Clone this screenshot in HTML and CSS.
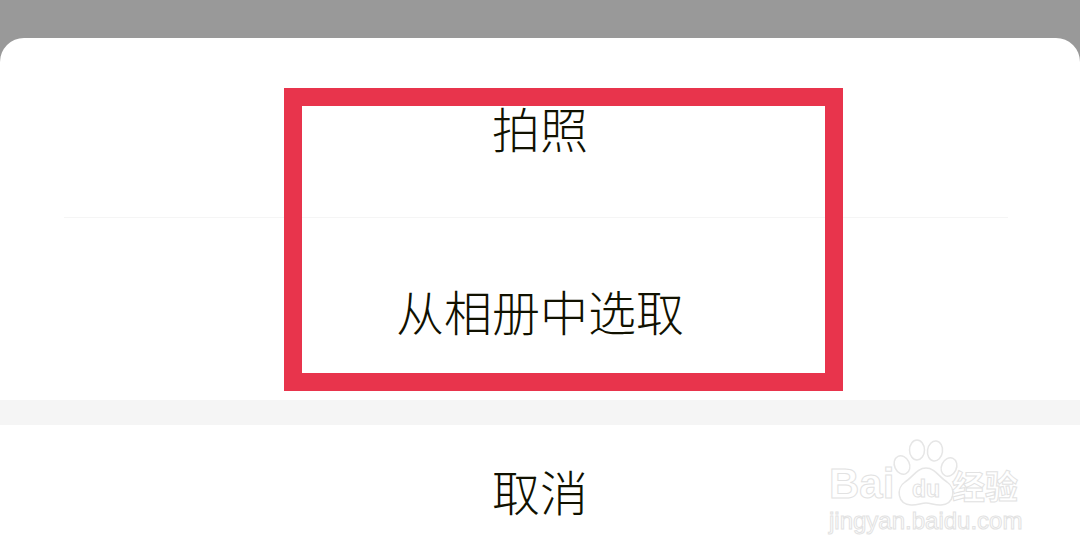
FILE: index.html
```html
<!DOCTYPE html>
<html lang="zh">
<head>
<meta charset="utf-8">
<title>选取照片</title>
<link rel="stylesheet" href="styles.css">
</head>
<body>
<div class="screen">
  <div class="scrim"></div>
  <div class="sheet">
    <div class="row row-first">拍照</div>
    <div class="row row-second">从相册中选取</div>
    <div class="band"></div>
    <div class="row row-cancel">取消</div>
  </div>
  <div class="highlight"></div>
  <div class="watermark">
    <div class="wm-top">
      <span class="wm-bai">Bai</span>
      <span class="wm-paw">
        <svg class="paw" viewBox="0 0 70 74" width="70" height="74" aria-hidden="true">
          <g fill="#fff" stroke="#e6e6e6" stroke-width="1.5">
            <ellipse cx="11" cy="26" rx="7.5" ry="9.5" transform="rotate(-25 11 26)"/>
            <ellipse cx="26" cy="11" rx="7.5" ry="10"/>
            <ellipse cx="44" cy="12" rx="7.5" ry="10" transform="rotate(8 44 12)"/>
            <ellipse cx="58" cy="28" rx="7.5" ry="9.5" transform="rotate(25 58 28)"/>
            <path d="M35 29c9 0 13 9 21 14 9 6 8 22-6 23-6 .5-10-2-15-2s-9 2.500-15 2C6 65 5 49 14 43c8-5 12-14 21-14z"/>
          </g>
        </svg>
        <span class="wm-du">du</span>
      </span>
      <span class="wm-cn">经验</span>
    </div>
    <div class="wm-url">jingyan.baidu.com</div>
  </div>
</div>
</body>
</html>
```
FILE: styles.css
```css
* { box-sizing: border-box; }
html, body { margin: 0; padding: 0; }
body { width: 1080px; height: 556px; overflow: hidden; background: #fff; }
.screen {
  position: relative;
  width: 1080px;
  height: 556px;
  display: flex;
  flex-direction: column;
  background: #999;
  overflow: hidden;
}
.scrim { height: 38px; flex: none; background: #999; }
.sheet {
  flex: 1;
  display: flex;
  flex-direction: column;
  background: #fff;
  border-radius: 24px 24px 0 0;
  font-family: "Noto Sans CJK SC", "Liberation Sans", sans-serif;
  font-size: 48px;
  font-weight: 300;
  color: #111100;
}
.row {
  display: flex;
  justify-content: center;
  align-items: center;
  line-height: 1;
}
.row-first {
  height: 180px;
  padding-bottom: 2px;
  position: relative;
}
.row-first::after {
  content: "";
  position: absolute;
  left: 64px;
  right: 72px;
  bottom: 0;
  height: 1px;
  background: #f5f5f5;
}
.row-second { height: 182px; padding-top: 2px; }
.band { height: 25px; flex: none; background: #f5f5f5; }
.row-cancel { flex: 1; padding-bottom: 2px; }
.highlight {
  position: absolute;
  left: 284px;
  top: 88px;
  width: 559px;
  height: 303px;
  border: 18px solid #e8344c;
}
.watermark {
  position: absolute;
  left: 829px;
  top: 440px;
  width: 195px;
  font-family: "Liberation Sans", sans-serif;
  color: #fff;
  -webkit-text-stroke: 1px #e2e2e2;
}
.wm-top { position: relative; height: 66px; }
.wm-bai {
  position: absolute;
  left: 0;
  top: 20px;
  font-size: 42px;
  font-weight: 700;
  line-height: 48px;
}
.wm-paw { position: absolute; left: 62px; top: -1px; width: 70px; height: 74px; }
.paw { display: block; }
.wm-du {
  position: absolute;
  left: 0;
  right: 0;
  top: 37px;
  text-align: center;
  font-size: 23px;
  font-weight: 700;
  line-height: 26px;
}
.wm-cn {
  position: absolute;
  left: 123px;
  top: 26px;
  font-family: "Noto Sans CJK SC", sans-serif;
  font-size: 33px;
  font-weight: 700;
  line-height: 38px;
  white-space: nowrap;
}
.wm-url {
  margin-top: 1px;
  font-size: 24px;
  line-height: 28px;
  white-space: nowrap;
}
```
